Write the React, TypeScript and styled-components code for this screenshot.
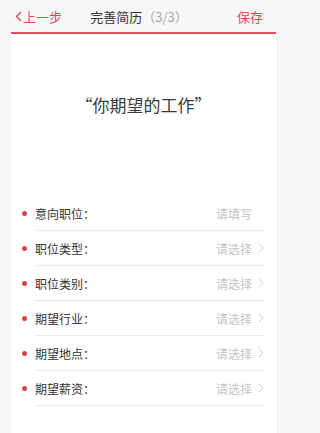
import React from "react";
import styled, { createGlobalStyle } from "styled-components";

const Global = createGlobalStyle`
  html, body { margin: 0; padding: 0; background: #f6f6f7; }
  body { font-family: "Noto Sans CJK SC", "Noto Sans", sans-serif; }
  * { box-sizing: border-box; }
`;

const Page = styled.div`
  width: 276px;
  height: 433px;
  display: flex;
  flex-direction: column;
  background: #f6f6f7;
  overflow: hidden;
`;

const Header = styled.div`
  height: 32px;
  display: flex;
  align-items: center;
  justify-content: space-between;
  padding: 0 13px 0 15px;
  font-size: 13px;
  background: #f7f7f7;
`;

const Back = styled.div`
  display: flex;
  align-items: center;
  gap: 1px;
  color: #e0474f;
  width: 70px;
`;

const Title = styled.div`
  color: #333;
  display: flex;
  align-items: center;
`;

const Sub = styled.span`
  color: #a8a8a8;
`;

const Save = styled.div`
  color: #e0474f;
  width: 70px;
  text-align: right;
`;

const Body = styled.div`
  flex: 1;
  margin-left: 11px;
  background: #fff;
  border-top: 2px solid #e2525b;
  display: flex;
  flex-direction: column;
`;

const Heading = styled.h1`
  margin: 59px 0 0;
  font-size: 17px;
  line-height: 24px;
  font-weight: 400;
  color: #3c3c3c;
  text-align: center;
`;

const List = styled.div`
  margin-top: 79px;
  display: flex;
  flex-direction: column;
`;

const Row = styled.div`
  display: flex;
  align-items: center;
`;

const Dot = styled.span`
  width: 5px;
  height: 5px;
  border-radius: 50%;
  background: #e0404a;
  margin: 0 8px 0 11px;
  flex: none;
`;

const Content = styled.div`
  flex: 1;
  height: 35px;
  margin-right: 12px;
  border-bottom: 1px solid #ececec;
  display: flex;
  align-items: center;
  justify-content: space-between;
`;

const Label = styled.span`
  font-size: 12px;
  color: #333;
`;

const Right = styled.div`
  display: flex;
  align-items: center;
  gap: 6px;
`;

const Placeholder = styled.span`
  font-size: 12px;
  color: #c4c4c4;
`;

const Chevron = styled.svg<{ $hidden?: boolean }>`
  width: 6px;
  height: 10px;
  visibility: ${(p) => (p.$hidden ? "hidden" : "visible")};
`;

const fields = [
  { label: "意向职位", placeholder: "请填写", arrow: false },
  { label: "职位类型", placeholder: "请选择", arrow: true },
  { label: "职位类别", placeholder: "请选择", arrow: true },
  { label: "期望行业", placeholder: "请选择", arrow: true },
  { label: "期望地点", placeholder: "请选择", arrow: true },
  { label: "期望薪资", placeholder: "请选择", arrow: true },
];

export default function App() {
  return (
    <Page>
      <Global />
      <Header>
        <Back>
          <svg width="7" height="11" viewBox="0 0 7 11">
            <path d="M6 1 L1.5 5.5 L6 10" fill="none" stroke="#e0474f" strokeWidth="1.4" />
          </svg>
          <span>上一步</span>
        </Back>
        <Title>
          完善简历<Sub>（3/3）</Sub>
        </Title>
        <Save>保存</Save>
      </Header>
      <Body>
        <Heading>“你期望的工作”</Heading>
        <List>
          {fields.map((f) => (
            <Row key={f.label}>
              <Dot />
              <Content>
                <Label>{f.label}：</Label>
                <Right>
                  <Placeholder>{f.placeholder}</Placeholder>
                  <Chevron viewBox="0 0 6 10" $hidden={!f.arrow}>
                    <path d="M0.8 0.8 L5 5 L0.8 9.2" fill="none" stroke="#cfcfcf" strokeWidth="1" />
                  </Chevron>
                </Right>
              </Content>
            </Row>
          ))}
        </List>
      </Body>
    </Page>
  );
}
